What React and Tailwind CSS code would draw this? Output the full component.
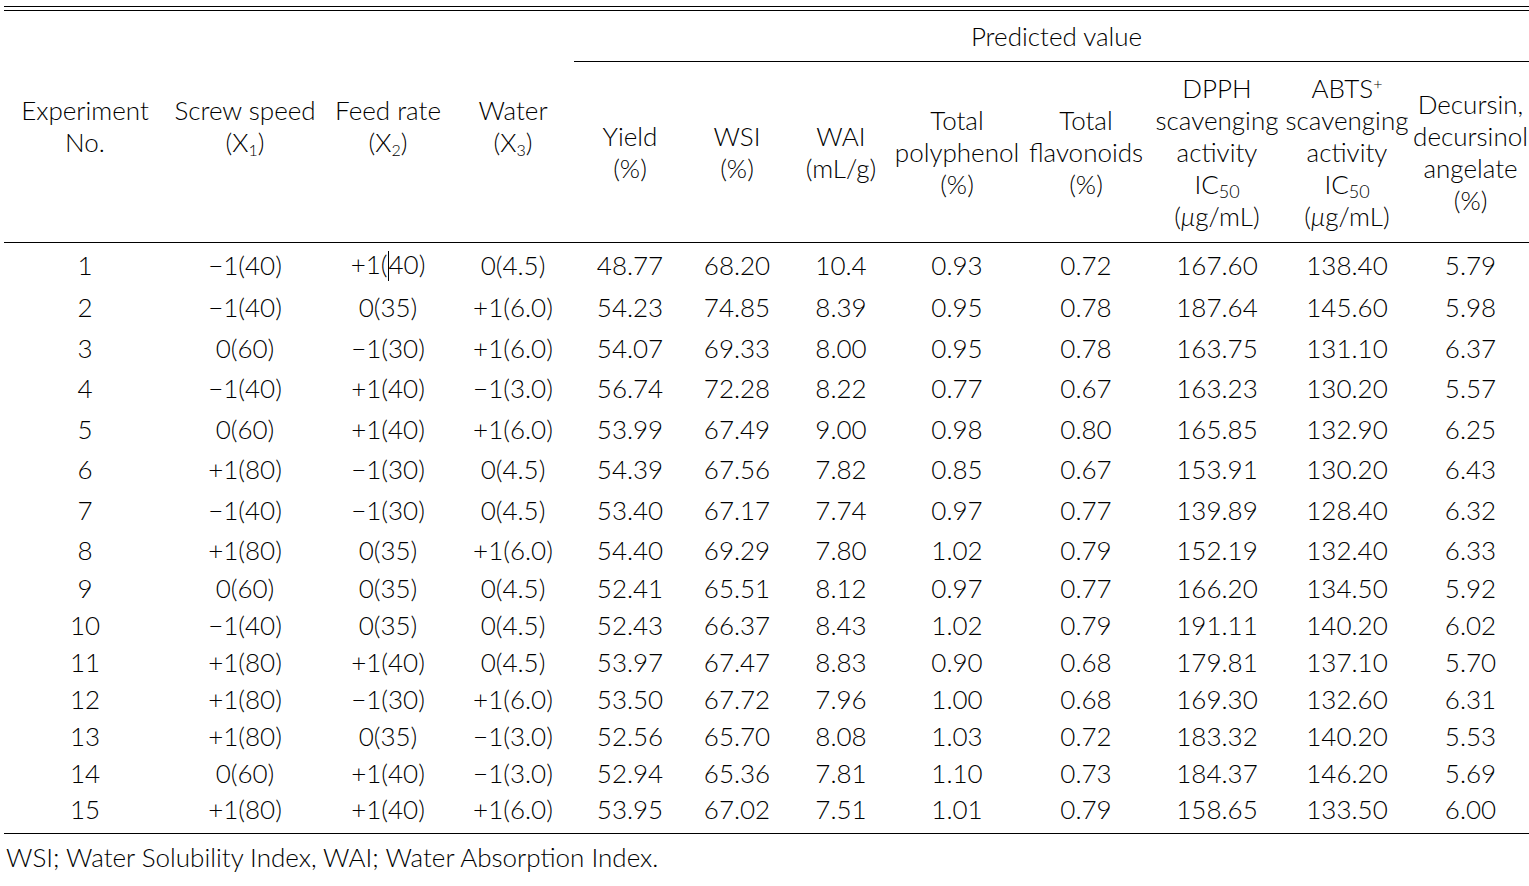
import React from "react";

const rows = [
  ["1", "−1(40)", "+1(40)", "0(4.5)", "48.77", "68.20", "10.4", "0.93", "0.72", "167.60", "138.40", "5.79"],
  ["2", "−1(40)", "0(35)", "+1(6.0)", "54.23", "74.85", "8.39", "0.95", "0.78", "187.64", "145.60", "5.98"],
  ["3", "0(60)", "−1(30)", "+1(6.0)", "54.07", "69.33", "8.00", "0.95", "0.78", "163.75", "131.10", "6.37"],
  ["4", "−1(40)", "+1(40)", "−1(3.0)", "56.74", "72.28", "8.22", "0.77", "0.67", "163.23", "130.20", "5.57"],
  ["5", "0(60)", "+1(40)", "+1(6.0)", "53.99", "67.49", "9.00", "0.98", "0.80", "165.85", "132.90", "6.25"],
  ["6", "+1(80)", "−1(30)", "0(4.5)", "54.39", "67.56", "7.82", "0.85", "0.67", "153.91", "130.20", "6.43"],
  ["7", "−1(40)", "−1(30)", "0(4.5)", "53.40", "67.17", "7.74", "0.97", "0.77", "139.89", "128.40", "6.32"],
  ["8", "+1(80)", "0(35)", "+1(6.0)", "54.40", "69.29", "7.80", "1.02", "0.79", "152.19", "132.40", "6.33"],
  ["9", "0(60)", "0(35)", "0(4.5)", "52.41", "65.51", "8.12", "0.97", "0.77", "166.20", "134.50", "5.92"],
  ["10", "−1(40)", "0(35)", "0(4.5)", "52.43", "66.37", "8.43", "1.02", "0.79", "191.11", "140.20", "6.02"],
  ["11", "+1(80)", "+1(40)", "0(4.5)", "53.97", "67.47", "8.83", "0.90", "0.68", "179.81", "137.10", "5.70"],
  ["12", "+1(80)", "−1(30)", "+1(6.0)", "53.50", "67.72", "7.96", "1.00", "0.68", "169.30", "132.60", "6.31"],
  ["13", "+1(80)", "0(35)", "−1(3.0)", "52.56", "65.70", "8.08", "1.03", "0.72", "183.32", "140.20", "5.53"],
  ["14", "0(60)", "+1(40)", "−1(3.0)", "52.94", "65.36", "7.81", "1.10", "0.73", "184.37", "146.20", "5.69"],
  ["15", "+1(80)", "+1(40)", "+1(6.0)", "53.95", "67.02", "7.51", "1.01", "0.79", "158.65", "133.50", "6.00"],
];

// row heights, taken from the reference
const heights = ["h-[45px]", "h-[40px]", "h-[41px]", "h-[40px]", "h-[41px]", "h-[40px]", "h-[41px]", "h-[40px]", "h-[36px]", "h-[37px]", "h-[37px]", "h-[37px]", "h-[37px]", "h-[37px]", "h-[42px]"];

const widths = [162, 158, 128, 122, 112, 102, 106, 126, 132, 130, 130, 117];

function Cell({ value, row, col }) {
  // the reference has a stray text cursor in row 1, feed rate
  if (row === 0 && col === 2) {
    return (
      <span>
        +1(<span className="inline-block w-0 h-[30px] border-l border-black align-[-7px]"></span>40)
      </span>
    );
  }
  return value;
}

export default function App() {
  return (
    <div
      className="w-[1529px] min-h-[886px] bg-white text-black pl-[4px] font-light"
      style={{ fontFamily: "Lato, 'Open Sans', sans-serif" }}
    >
      <div className="pt-[6px]">
        <div className="h-px bg-black"></div>
        <div className="h-[3px]"></div>
        <div className="h-px bg-black"></div>
      </div>

      <table className="table-fixed border-collapse w-[1525px] text-[26px] leading-[32px]">
        <colgroup>
          {widths.map((w, i) => (
            <col key={i} style={{ width: w }} />
          ))}
        </colgroup>
        <thead>
          <tr className="h-[50px]">
            <th rowSpan={2} className="font-light align-middle text-center border-b border-black">
              Experiment
              <br />
              No.
            </th>
            <th rowSpan={2} className="font-light align-middle text-center border-b border-black">
              Screw speed
              <br />
              (X<sub className="text-[16px]">1</sub>)
            </th>
            <th rowSpan={2} className="font-light align-middle text-center border-b border-black">
              Feed rate
              <br />
              (X<sub className="text-[16px]">2</sub>)
            </th>
            <th rowSpan={2} className="font-light align-middle text-center border-b border-black">
              Water
              <br />
              (X<sub className="text-[16px]">3</sub>)
            </th>
            <th colSpan={8} className="font-light align-middle text-center border-b border-black pl-[10px]">
              Predicted value
            </th>
          </tr>
          <tr className="h-[181px]">
            <th className="font-light align-middle text-center border-b border-black">
              Yield
              <br />
              (%)
            </th>
            <th className="font-light align-middle text-center border-b border-black">
              WSI
              <br />
              (%)
            </th>
            <th className="font-light align-middle text-center border-b border-black">
              WAI
              <br />
              (mL/g)
            </th>
            <th className="font-light align-middle text-center border-b border-black whitespace-nowrap">
              Total
              <br />
              polyphenol
              <br />
              (%)
            </th>
            <th className="font-light align-middle text-center border-b border-black whitespace-nowrap">
              Total
              <br />
              flavonoids
              <br />
              (%)
            </th>
            <th className="font-light align-middle text-center border-b border-black whitespace-nowrap">
              DPPH
              <br />
              scavenging
              <br />
              activity
              <br />
              IC<sub className="text-[18px]">50</sub>
              <br />
              (<i>μ</i>g/mL)
            </th>
            <th className="font-light align-middle text-center border-b border-black whitespace-nowrap">
              ABTS<sup className="text-[16px]">+</sup>
              <br />
              scavenging
              <br />
              activity
              <br />
              IC<sub className="text-[18px]">50</sub>
              <br />
              (<i>μ</i>g/mL)
            </th>
            <th className="font-light align-middle text-center border-b border-black whitespace-nowrap">
              Decursin,
              <br />
              decursinol
              <br />
              angelate
              <br />
              (%)
            </th>
          </tr>
        </thead>
        <tbody>
          {rows.map((r, i) => (
            <tr key={i} className={`${heights[i]} ${i === rows.length - 1 ? "border-b border-black" : ""}`}>
              {r.map((v, j) => (
                <td key={j} className={`text-center align-middle whitespace-nowrap ${i === rows.length - 1 ? "pb-[6px]" : ""}`}>
                  <Cell value={v} row={i} col={j} />
                </td>
              ))}
            </tr>
          ))}
        </tbody>
      </table>

      <p className="pt-[7px] pl-[2px] text-[26px] leading-[32px]">
        WSI; Water Solubility Index, WAI; Water Absorption Index.
      </p>
    </div>
  );
}
